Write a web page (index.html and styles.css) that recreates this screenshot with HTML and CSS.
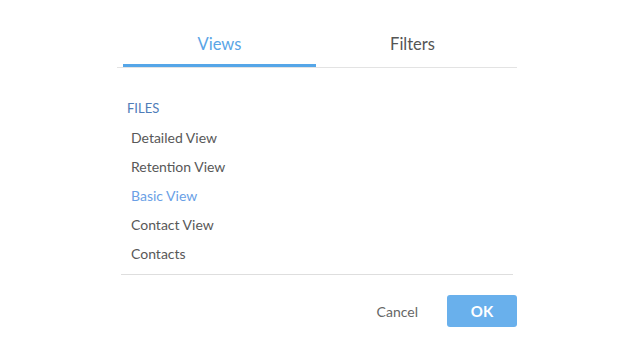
FILE: index.html
```html
<!DOCTYPE html>
<html lang="en">
<head>
    <meta charset="UTF-8">
    <meta name="viewport" content="width=device-width, initial-scale=1.0">
    <title>Views</title>
    <link rel="stylesheet" href="styles.css">
</head>
<body>
    <div class="dialog">
        <div class="tabs">
            <div class="tab active">Views</div>
            <div class="tab">Filters</div>
        </div>

        <div class="view-list">
            <div class="group-title">FILES</div>
            <ul class="items">
                <li>Detailed View</li>
                <li>Retention View</li>
                <li class="selected">Basic View</li>
                <li>Contact View</li>
                <li>Contacts</li>
            </ul>
        </div>

        <div class="footer">
            <button class="btn-cancel">Cancel</button>
            <button class="btn-ok">OK</button>
        </div>
    </div>
</body>
</html>
```

FILE: styles.css
```css
body {
    margin: 0;
    font-family: Lato, "Open Sans", sans-serif;
    background: #fff;
    color: #555;
}
.dialog {
    width: 400px;
    margin-left: 117px;
    padding-top: 20px;
}
.tabs {
    display: flex;
    padding-left: 6px;
    border-bottom: 1px solid #e3e3e3;
}
.tab {
    width: 193px;
    text-align: center;
    font-size: 16.5px;
    line-height: 20px;
    padding: 14px 0 10px;
    border-bottom: 3px solid transparent;
    color: #555;
}
.tab.active {
    color: #5aa5e6;
    border-bottom-color: #55a6e8;
}
.view-list {
    margin-left: 4px;
    width: 392px;
    padding-top: 32px;
    padding-bottom: 6px;
    border-bottom: 1px solid #dedede;
}
.group-title {
    font-size: 13px;
    line-height: 16px;
    color: #4f7cb8;
    padding-left: 6px;
    margin-bottom: 7px;
}
.items {
    list-style: none;
    margin: 0;
    padding: 0 0 0 10px;
}
.items li {
    font-size: 14px;
    line-height: 29px;
    color: #585858;
}
.items li.selected {
    color: #6a9fe6;
}
.footer {
    display: flex;
    justify-content: flex-end;
    align-items: center;
    margin-top: 20px;
}
.footer button {
    font-family: inherit;
    border: none;
    cursor: pointer;
}
.btn-cancel {
    background: none;
    color: #666;
    font-size: 14px;
    padding: 0;
    margin-right: 29px;
}
.btn-ok {
    width: 70px;
    height: 32px;
    background: #69b0ec;
    color: #fff;
    font-size: 15px;
    font-weight: bold;
    border-radius: 3px;
}
```
